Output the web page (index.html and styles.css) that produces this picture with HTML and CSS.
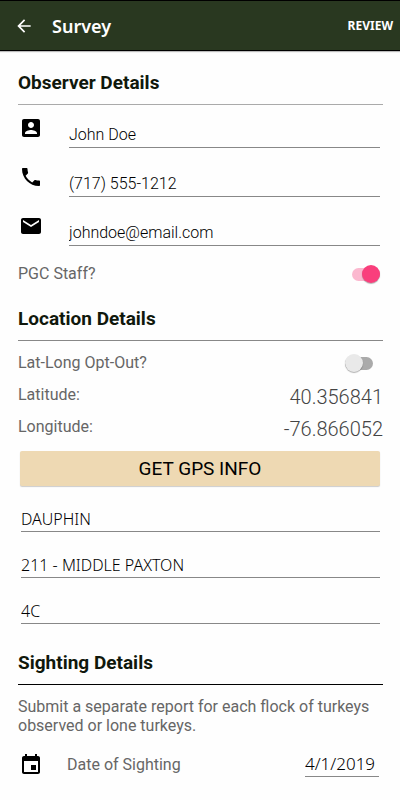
FILE: index.html
```html
<!DOCTYPE html>
<html lang="en">
<head>
    <meta charset="UTF-8">
    <meta name="viewport" content="width=device-width, initial-scale=1.0">
    <title>Survey</title>
    <link rel="stylesheet" href="styles.css">
</head>
<body>
    <header class="app-bar">
        <button class="back" type="button" aria-label="Back">
            <svg viewBox="0 0 24 24"><path d="M20 11H7.83l5.59-5.59L12 4l-8 8 8 8 1.41-1.41L7.83 13H20v-2z"/></svg>
        </button>
        <h1>Survey</h1>
        <button class="review" type="button">REVIEW</button>
    </header>

    <main>
        <h2 class="rule-light">Observer Details</h2>
        <div class="contact">
            <label for="name" aria-label="Name">
                <svg viewBox="0 0 24 24"><path d="M3 5v14c0 1.100.89 2 2 2h14c1.100 0 2-.9 2-2V5c0-1.100-.9-2-2-2H5c-1.110 0-2 .9-2 2zm12 4c0 1.660-1.340 3-3 3s-3-1.340-3-3 1.340-3 3-3 3 1.340 3 3zm-9 8c0-2 4-3.100 6-3.100s6 1.100 6 3.100v1H6v-1z"/></svg>
            </label>
            <input class="field" type="text" id="name" value="John Doe">
        </div>
        <div class="contact">
            <label for="phone" aria-label="Phone">
                <svg viewBox="0 0 24 24"><path d="M6.620 10.790c1.440 2.830 3.760 5.140 6.590 6.590l2.200-2.200c.27-.27.67-.36 1.020-.24 1.120.37 2.330.57 3.570.57.55 0 1 .45 1 1V20c0 .55-.45 1-1 1-9.390 0-17-7.610-17-17 0-.55.45-1 1-1h3.500c.55 0 1 .45 1 1 0 1.250.2 2.450.57 3.570.11.35.03.74-.25 1.020l-2.200 2.200z"/></svg>
            </label>
            <input class="field" type="tel" id="phone" value="(717) 555-1212">
        </div>
        <div class="contact">
            <label for="email" aria-label="Email">
                <svg viewBox="0 0 24 24"><path d="M20 4H4c-1.100 0-1.990.9-1.990 2L2 18c0 1.100.9 2 2 2h16c1.100 0 2-.9 2-2V6c0-1.100-.9-2-2-2zm0 4l-8 5-8-5V6l8 5 8-5v2z"/></svg>
            </label>
            <input class="field" type="email" id="email" value="johndoe@email.com">
        </div>
        <div class="row staff">
            <label for="staff">PGC Staff?</label>
            <input class="switch" type="checkbox" id="staff" checked>
        </div>

        <h2>Location Details</h2>
        <div class="location">
            <div class="row opt-out">
                <label for="optOut">Lat-Long Opt-Out?</label>
                <input class="switch" type="checkbox" id="optOut">
            </div>
            <div class="row">
                <span>Latitude:</span>
                <output class="coord">40.356841</output>
            </div>
            <div class="row">
                <span>Longitude:</span>
                <output class="coord">-76.866052</output>
            </div>
        </div>
        <button class="gps" type="button">GET GPS INFO</button>
        <div class="places">
            <input class="field" type="text" aria-label="County" value="DAUPHIN">
            <input class="field" type="text" aria-label="Township" value="211 - MIDDLE PAXTON">
            <input class="field" type="text" aria-label="Management unit" value="4C">
        </div>

        <h2 class="rule-dark">Sighting Details</h2>
        <p>Submit a separate report for each flock of turkeys observed or lone turkeys.</p>
        <div class="date-row">
            <svg viewBox="0 0 24 24"><path d="M17 12h-5v5h5v-5zM16 1v2H8V1H6v2H5c-1.110 0-1.990.9-1.990 2L3 19c0 1.100.89 2 2 2h14c1.100 0 2-.9 2-2V5c0-1.100-.9-2-2-2h-1V1h-2zm3 18H5V8h14v11z"/></svg>
            <label for="date">Date of Sighting</label>
            <input class="field" type="text" id="date" value="4/1/2019">
        </div>
    </main>
</body>
</html>
```
FILE: styles.css
```css
* {
    box-sizing: border-box;
}
body {
    margin: 0;
    background-color: #fefefe;
    color: #666;
    font-family: Roboto, sans-serif;
    font-size: 16px;
    line-height: 20px;
}
button, input {
    font-family: inherit;
    font-size: inherit;
    line-height: inherit;
    margin: 0;
    padding: 0;
    border: none;
    border-radius: 0;
    background: none;
}
svg {
    display: block;
    width: 24px;
    height: 24px;
    fill: #000;
}

/* app bar */
.app-bar {
    display: flex;
    align-items: center;
    height: 51px;
    padding: 0 7px 0 14px;
    background-color: #293820;
    border-top: 1px solid #000;
    border-bottom: 1px solid #000;
    box-shadow: 0 1px 1px #bbb;
    color: #fff;
    font-family: "Noto Sans", sans-serif;
}
.back svg {
    width: 20px;
    height: 20px;
    fill: #fff;
}
h1 {
    flex: 1;
    margin: 0 0 0 18px;
    font-size: 18px;
    font-weight: 600;
}
.review {
    color: #fff;
    font-size: 12px;
    font-weight: 700;
}

main {
    padding: 0 17px 12px 18px;
}
h2 {
    margin: 0;
    padding: 20px 0 9px;
    border-bottom: 1px solid #888;
    color: #10180c;
    font-size: 19px;
    font-weight: 700;
    line-height: 24px;
}
.rule-light {
    border-color: #aaa;
}
.rule-dark {
    border-color: #000;
}

.field {
    height: 24px;
    min-width: 0;
    padding-bottom: 2px;
    border-bottom: 1px solid #888;
    color: #000;
    font-weight: 300;
}

.contact {
    display: flex;
    align-items: flex-end;
    height: 43px;
    margin-bottom: 6px;
    padding: 0 3px 0 1px;
}
.contact label {
    width: 50px;
    height: 32px;
}
.contact .field {
    flex: 1;
}

.row {
    display: flex;
    align-items: center;
    justify-content: space-between;
    height: 32px;
}
.staff {
    height: 26px;
    margin-top: 15px;
    padding-right: 3px;
}
.opt-out {
    padding-right: 10px;
}
.location {
    padding-top: 6px;
}
.coord {
    padding-top: 4px;
    color: #444;
    font-size: 20px;
    font-weight: 300;
}

.switch {
    appearance: none;
    display: flex;
    align-items: center;
    width: 28px;
    height: 13px;
    background: #aaa;
    border-radius: 7px;
}
.switch::before {
    content: "";
    flex: none;
    width: 18px;
    height: 18px;
    border-radius: 50%;
    background-color: #e9e9e9;
    box-shadow: 0 1px 1px rgba(0, 0, 0, 0.3);
}
.switch:checked {
    justify-content: flex-end;
    background: #fbb8cf;
}
.switch:checked::before {
    background-color: #f93f7c;
}

.gps {
    display: block;
    width: calc(100% - 5px);
    height: 35px;
    margin: 8px 3px 0 2px;
    border-radius: 2px;
    background-color: #eed9b3;
    box-shadow: 0 1px 1px #ccc;
    color: #000;
    font-size: 19px;
}

.places {
    display: grid;
    gap: 22px;
    padding: 22px 3px 7px;
    font-family: "Noto Sans", sans-serif;
}

p {
    margin: 12px 0 0;
    line-height: 19px;
}
.date-row {
    display: flex;
    align-items: center;
    margin-top: 18px;
    padding: 0 4px 0 1px;
}
.date-row label {
    flex: 1;
    margin-left: 24px;
}
.date-row .field {
    width: 74px;
    font-family: "Noto Sans", sans-serif;
    font-size: 17px;
}
```
